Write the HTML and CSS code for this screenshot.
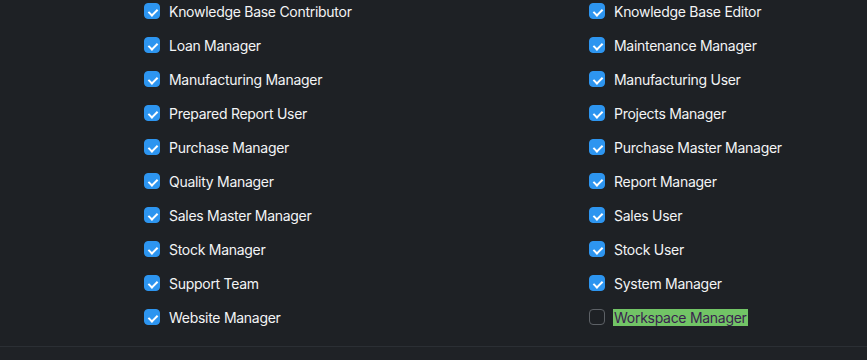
FILE: index.html
```html
<!DOCTYPE html>
<html>
<head>
<meta charset="utf-8">
<link rel="stylesheet" href="styles.css">
</head>
<body>
<div class="section">
  <div class="grid">
    <label class="item"><span class="cb on"></span><span class="lbl">Knowledge Base Contributor</span></label>
    <label class="item"><span class="cb on"></span><span class="lbl">Knowledge Base Editor</span></label>
    <label class="item"><span class="cb on"></span><span class="lbl">Loan Manager</span></label>
    <label class="item"><span class="cb on"></span><span class="lbl">Maintenance Manager</span></label>
    <label class="item"><span class="cb on"></span><span class="lbl">Manufacturing Manager</span></label>
    <label class="item"><span class="cb on"></span><span class="lbl">Manufacturing User</span></label>
    <label class="item"><span class="cb on"></span><span class="lbl">Prepared Report User</span></label>
    <label class="item"><span class="cb on"></span><span class="lbl">Projects Manager</span></label>
    <label class="item"><span class="cb on"></span><span class="lbl">Purchase Manager</span></label>
    <label class="item"><span class="cb on"></span><span class="lbl">Purchase Master Manager</span></label>
    <label class="item"><span class="cb on"></span><span class="lbl">Quality Manager</span></label>
    <label class="item"><span class="cb on"></span><span class="lbl">Report Manager</span></label>
    <label class="item"><span class="cb on"></span><span class="lbl">Sales Master Manager</span></label>
    <label class="item"><span class="cb on"></span><span class="lbl">Sales User</span></label>
    <label class="item"><span class="cb on"></span><span class="lbl">Stock Manager</span></label>
    <label class="item"><span class="cb on"></span><span class="lbl">Stock User</span></label>
    <label class="item"><span class="cb on"></span><span class="lbl">Support Team</span></label>
    <label class="item"><span class="cb on"></span><span class="lbl">System Manager</span></label>
    <label class="item"><span class="cb on"></span><span class="lbl">Website Manager</span></label>
    <label class="item"><span class="cb"></span><span class="lbl hl">Workspace Manager</span></label>
  </div>
</div>
<div class="footer"></div>
</body>
</html>
```
FILE: styles.css
```css
html, body {
  margin: 0;
  padding: 0;
  background: #1e2125;
  font-family: Inter, "Noto Sans", sans-serif;
  font-size: 14px;
  letter-spacing: -0.28px;
  color: #f3f4f5;
}
.section {
  padding: 0 0 12px 144px;
  margin-top: -6px;
  border-bottom: 1px solid #2b2f34;
}
.grid {
  display: grid;
  grid-template-columns: 445px 278px;
}
.item {
  display: flex;
  align-items: center;
  height: 34px;
  gap: 9px;
}
.cb {
  width: 16px;
  height: 16px;
  box-sizing: border-box;
  border-radius: 4px;
  border: 1px solid #5d6166;
  flex: none;
  position: relative;
}
.cb.on {
  background: #2d95f0;
  border-color: #2d95f0;
}
.cb.on::after {
  content: "";
  position: absolute;
  left: 4.5px;
  top: 2.5px;
  width: 4px;
  height: 7px;
  border: solid #fff;
  border-width: 0 2px 2px 0;
  transform: rotate(45deg);
}
.lbl {
  line-height: 17px;
}
.hl {
  background: #72c466;
  color: #3a1f4f;
  padding: 0 1px;
  margin-left: -1px;
}
.footer {
  background: #1f2226;
  height: 20px;
}
```
